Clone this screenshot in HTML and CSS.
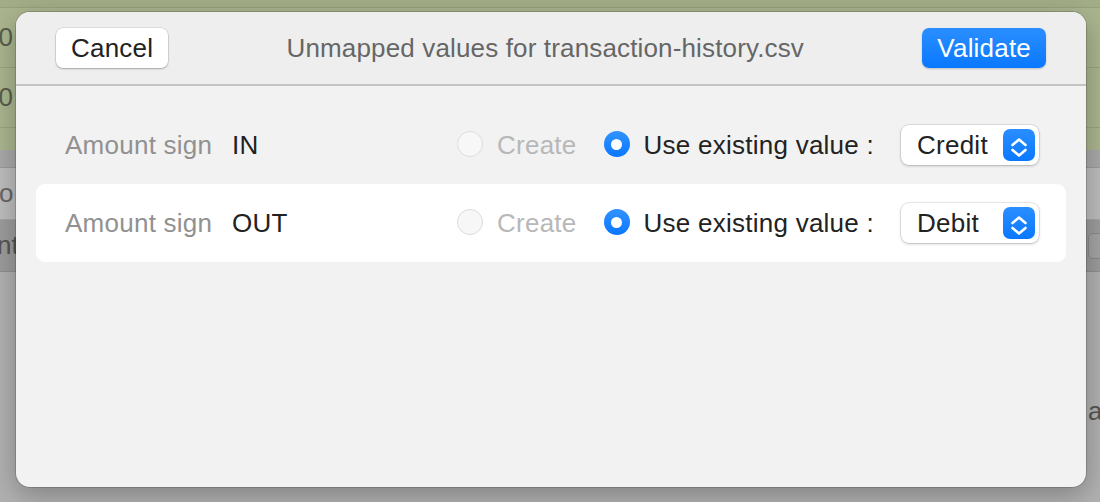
FILE: index.html
```html
<!DOCTYPE html>
<html>
<head>
<meta charset="utf-8">
<link rel="stylesheet" href="styles.css">
</head>
<body>
<div class="desk">
  <div class="bg">
    <div class="bg-strip"></div>
    <div class="bg-row green tall"><span class="digits">70</span></div>
    <div class="bg-row green tall"><span class="digits">70</span></div>
    <div class="bg-row green short"></div>
    <div class="bg-row grey1"></div>
    <div class="bg-row grey2"><span class="lt">o</span></div>
    <div class="bg-row grey3"><span class="lt">nt</span><span class="xbtn"></span></div>
    <div class="bg-row grey4"><span class="rt">a</span></div>
  </div>

  <div class="sheet">
    <header class="sheet-head">
      <button class="btn">Cancel</button>
      <div class="title">Unmapped values for transaction-history.csv</div>
      <button class="btn primary">Validate</button>
    </header>
    <div class="sheet-body">
      <div class="map-row">
        <span class="lbl">Amount sign</span>
        <span class="val">IN</span>
        <div class="opts">
          <span class="radio off"></span>
          <span class="opt-text muted">Create</span>
          <span class="radio on"></span>
          <span class="opt-text">Use existing value :</span>
          <div class="popup">
            <span class="popup-text">Credit</span>
            <span class="stepper"><svg viewBox="0 0 32 32" width="32" height="32"><path d="M9.5 16 L16 10.5 L22.5 16 M9.5 21 L16 26.5 L22.5 21" fill="none" stroke="#fff" stroke-width="2.6" stroke-linecap="round" stroke-linejoin="round"/></svg></span>
          </div>
        </div>
      </div>
      <div class="map-row alt">
        <span class="lbl">Amount sign</span>
        <span class="val">OUT</span>
        <div class="opts">
          <span class="radio off"></span>
          <span class="opt-text muted">Create</span>
          <span class="radio on"></span>
          <span class="opt-text">Use existing value :</span>
          <div class="popup">
            <span class="popup-text">Debit</span>
            <span class="stepper"><svg viewBox="0 0 32 32" width="32" height="32"><path d="M9.5 16 L16 10.5 L22.5 16 M9.5 21 L16 26.5 L22.5 21" fill="none" stroke="#fff" stroke-width="2.6" stroke-linecap="round" stroke-linejoin="round"/></svg></span>
          </div>
        </div>
      </div>
    </div>
  </div>
</div>
</body>
</html>
```

FILE: styles.css
```css
body {
  margin: 0;
  font-family: "Liberation Sans", Arial, sans-serif;
}

.desk {
  position: relative;
  width: 1100px;
  height: 502px;
  overflow: hidden;
  background: #acacac;
}

/* background window */
.bg {
  display: flex;
  flex-direction: column;
  height: 100%;
}
.bg-row {
  display: flex;
  align-items: center;
  font-size: 26px;
  color: #555;
  flex-shrink: 0;
}
.bg-strip {
  height: 7px;
  background: #a3ae88;
  border-bottom: 1px solid #97a27c;
}
.green {
  background: #aab58f;
  border-bottom: 1px solid #9aa57f;
}
.tall { height: 59px; }
.short { height: 22px; border-bottom: none; }
.digits {
  margin-left: -16px;
  color: #595d4c;
}
.grey1 {
  height: 17px;
  background: #a9a9a9;
  border-bottom: 1px solid #9b9b9b;
}
.grey2 {
  height: 51px;
  background: #bdbdbd;
  border-bottom: 1px solid #a6a6a6;
}
.grey3 {
  height: 51px;
  background: #9c9c9c;
  border-bottom: 1px solid #8f8f8f;
}
.grey4 {
  flex: 1;
  background: #b1b1b1;
  align-items: flex-start;
}
.lt {
  margin-left: -1px;
  color: #666;
}
.grey3 .lt { margin-left: -3px; color: #555; }
.xbtn {
  margin-left: auto;
  margin-right: -12px;
  width: 22px;
  height: 24px;
  border: 1px solid #8a8a8a;
  border-radius: 5px;
  background: #a4a4a4;
}
.rt {
  margin-left: 1088px;
  margin-top: 124px;
  color: #555;
}

/* sheet */
.sheet {
  position: absolute;
  left: 16px;
  top: 12px;
  width: 1070px;
  height: 475px;
  border-radius: 14px;
  background: #f2f2f2;
  box-shadow: 0 0 0 1px rgba(0, 0, 0, 0.16), 0 8px 28px rgba(0, 0, 0, 0.28);
  overflow: hidden;
  display: flex;
  flex-direction: column;
}
.sheet-head {
  height: 72px;
  flex-shrink: 0;
  background: #eeeeee;
  border-bottom: 2px solid #c4c4c4;
  display: flex;
  align-items: center;
  justify-content: space-between;
  padding: 0 40px;
}
.btn {
  height: 40px;
  padding: 0 15px;
  border: none;
  border-radius: 7px;
  background: #ffffff;
  box-shadow: 0 0 0 0.5px rgba(0, 0, 0, 0.14), 0 1px 2px rgba(0, 0, 0, 0.25);
  font-family: "Liberation Sans", Arial, sans-serif;
  font-size: 26px;
  letter-spacing: 0.2px;
  color: #222;
}
.btn.primary {
  padding: 0 15px;
  background: linear-gradient(#2a8eff, #0a78ff);
  color: #fff;
  box-shadow: 0 1px 2px rgba(0, 0, 0, 0.2);
}
.title {
  font-size: 26px;
  letter-spacing: 0.15px;
  color: #666;
}

.sheet-body {
  padding: 20px;
  display: flex;
  flex-direction: column;
}
.map-row {
  height: 78px;
  display: flex;
  align-items: center;
  padding: 0 27px 0 29px;
  border-radius: 9px;
  font-size: 26px;
  letter-spacing: 0.25px;
}
.map-row.alt {
  background: #ffffff;
}
.lbl {
  width: 167px;
  color: #919191;
}
.val {
  color: #222;
}
.opts {
  margin-left: auto;
  display: flex;
  align-items: center;
}
.radio {
  width: 26px;
  height: 26px;
  border-radius: 50%;
  box-sizing: border-box;
  display: flex;
  align-items: center;
  justify-content: center;
  margin-top: -2px;
}
.radio.off {
  background: #f7f7f7;
  border: 1px solid #dcdcdc;
}
.radio.on {
  margin-left: 27px;
  background: linear-gradient(#3293ff, #0a77ff);
}
.radio.on::after {
  content: "";
  width: 11px;
  height: 11px;
  border-radius: 50%;
  background: #fff;
}
.opt-text {
  margin-left: 14px;
  color: #222;
}
.opt-text.muted {
  color: #b8b8b8;
}
.popup {
  margin-left: 27px;
  width: 138px;
  height: 40px;
  box-sizing: border-box;
  border-radius: 8px;
  background: #fff;
  box-shadow: 0 0 0 0.5px rgba(0, 0, 0, 0.14), 0 1px 3px rgba(0, 0, 0, 0.22);
  display: flex;
  align-items: center;
  padding: 0 4px 0 16px;
}
.popup-text {
  color: #222;
}
.stepper {
  margin-left: auto;
  width: 32px;
  height: 32px;
  border-radius: 7px;
  background: linear-gradient(#2a8eff, #0a78ff);
  display: flex;
}
```
